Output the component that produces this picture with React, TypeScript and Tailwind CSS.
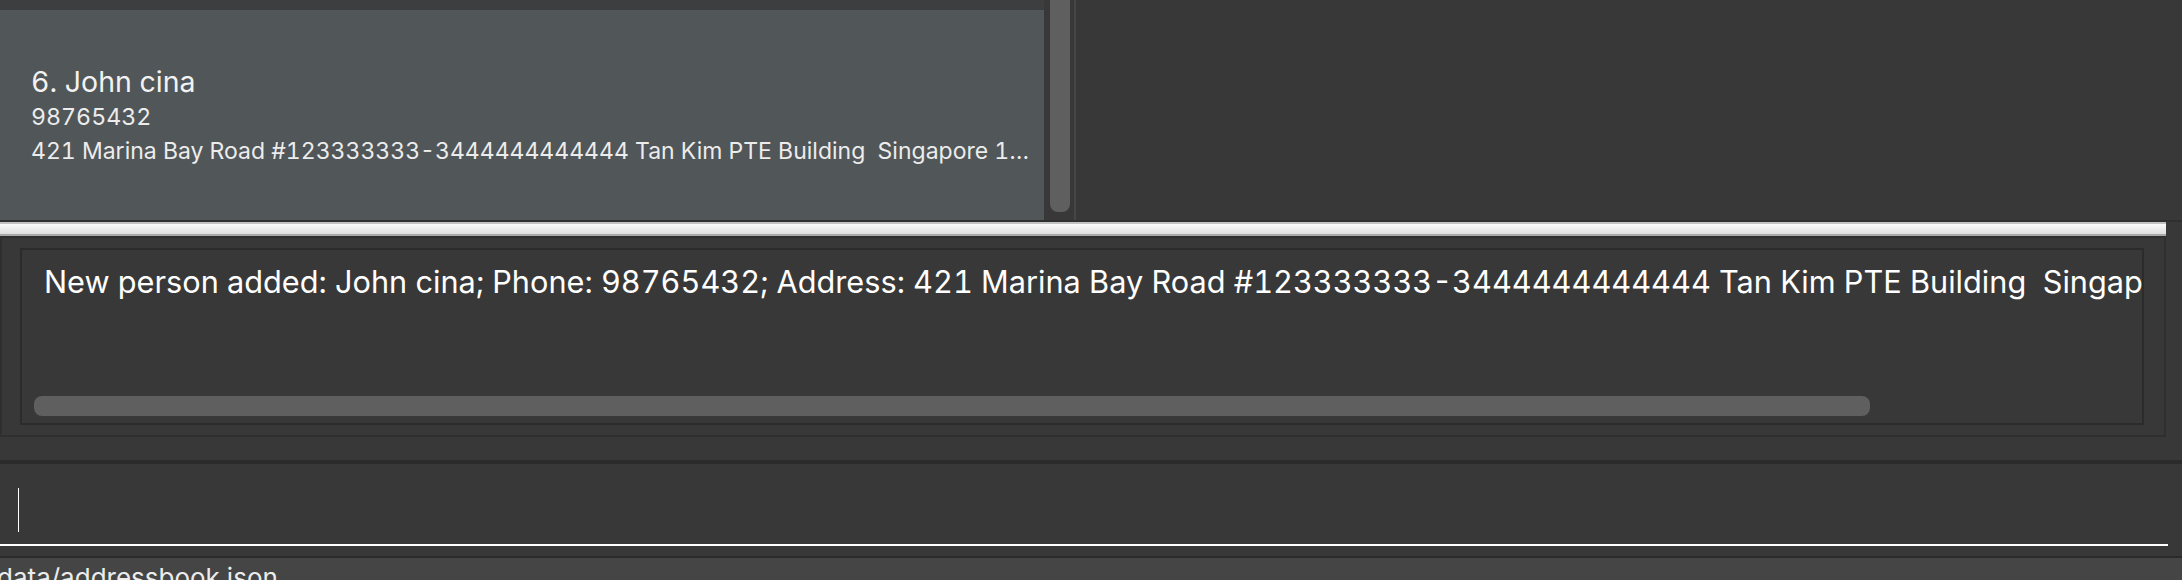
export default function App() {
  const message =
    "New person added: John cina; Phone: 98765432; Address: 421 Marina Bay Road #123333333-3444444444444 Tan Kim PTE Building  Singapore 123456"
  const address =
    "421 Marina Bay Road #123333333-3444444444444 Tan Kim PTE Building  Singapore 123456"

  return (
    <div className="w-[2182px] h-[580px] overflow-hidden bg-[#383838] flex flex-col font-['Inter',sans-serif] text-white tabular-nums">
      {/* person list */}
      <div className="h-[220px] flex shrink-0">
        <div className="w-[1044px] bg-[#3c3e40] pt-[10px] flex flex-col">
          <div className="flex-1 bg-[#515658] pl-[31px] pr-[10px] pt-[54px] flex flex-col min-w-0">
            <div className="text-[28.5px] leading-[36px] text-[#f2f2f2] whitespace-nowrap">6. John cina</div>
            <div className="text-[23.2px] leading-[34px] text-[#ececec] whitespace-nowrap">98765432</div>
            <div className="text-[23px] leading-[34px] text-[#ececec] whitespace-pre overflow-hidden text-ellipsis">
              {address}
            </div>
          </div>
        </div>
        <div className="w-[30px] bg-[#383838] pl-[6px]">
          <div className="w-[20px] h-[212px] rounded-b-[8px] bg-[#5f5f5f]" />
        </div>
        <div className="w-[2px] bg-[#464646]" />
        <div className="flex-1 bg-[#383838]" />
      </div>
      <div className="h-[2px] bg-[#2f2f2f] shrink-0" />

      {/* split divider */}
      <div className="h-[14px] w-[2166px] shrink-0 border-y-2 border-t-[#c2c2c2] border-b-[#a9a9a9] bg-gradient-to-b from-[#fbfbfb] to-[#dedede]" />

      {/* result display */}
      <div className="h-[224px] shrink-0 flex flex-col">
        <div className="h-[201px] w-[2166px] border-2 border-[#2f2f2f] pl-[18px] pr-[20px] pt-[10px] pb-[10px] flex">
          <div className="flex-1 min-w-0 border-2 border-[#2b2b2b] flex flex-col justify-between overflow-hidden">
            <div className="pl-[22px] pt-[12px] text-[30.7px] leading-[40px] whitespace-pre overflow-hidden">
              {message}
            </div>
            <div className="ml-[12px] mb-[7px] w-[1836px] h-[20px] rounded-[8px] bg-[#5f5f5f]" />
          </div>
        </div>
      </div>
      <div className="h-[4px] bg-[#2b2b2b] shrink-0" />

      {/* command box */}
      <div className="h-[80px] shrink-0 pl-[18px] pt-[24px]">
        <div className="w-px h-[44px] bg-white" />
      </div>
      <div className="h-[2px] w-[2168px] bg-white shrink-0" />
      <div className="h-[10px] shrink-0" />
      <div className="h-[2px] bg-[#2b2b2b] shrink-0" />

      {/* status bar */}
      <div className="h-[22px] shrink-0 bg-[#454545] overflow-hidden pt-[4px]">
        <div className="-ml-[3px] text-[26px] leading-[32px] text-[#ececec] whitespace-nowrap">data/addressbook.json</div>
      </div>
    </div>
  )
}
